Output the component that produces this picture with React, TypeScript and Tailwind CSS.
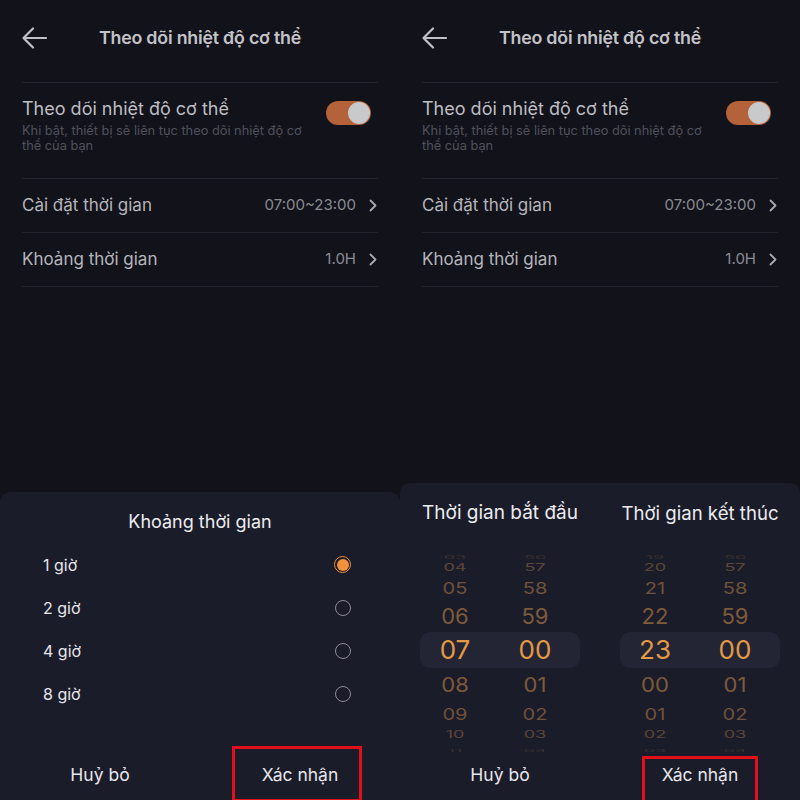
import React from "react";

function BackArrow() {
  return (
    <svg width="26" height="22" viewBox="0 0 26 22" fill="none">
      <path d="M25 11H2.5M12 1.5L2.5 11L12 20.5" stroke="#bfc0c5" strokeWidth="2.2" strokeLinecap="round" strokeLinejoin="round" />
    </svg>
  );
}

function Chevron() {
  return (
    <svg width="8" height="13" viewBox="0 0 8 13" fill="none">
      <path d="M1.5 1.5L6.5 6.5L1.5 11.5" stroke="#a9aab0" strokeWidth="1.8" strokeLinecap="round" strokeLinejoin="round" />
    </svg>
  );
}

function TopScreen() {
  return (
    <div className="flex flex-col">
      <div className="grid h-[82px] grid-cols-[70px_1fr_70px] items-center pb-[6px]">
        <div className="pl-[21px]">
          <BackArrow />
        </div>
        <div className="whitespace-nowrap text-center text-[17.8px] font-semibold tracking-[-0.2px] text-[#c3c3c8]">
          Theo dõi nhiệt độ cơ thể
        </div>
        <div />
      </div>
      <div className="mx-[22px] h-px bg-[#22232d]" />
      <div className="flex h-[95px] items-start justify-between pl-[22px] pr-[29px] pt-[14px]">
        <div className="flex flex-col">
          <div className="text-[18px] leading-[24px] text-[#bdbdc2]">Theo dõi nhiệt độ cơ thể</div>
          <div className="mt-[2px] whitespace-nowrap text-[12.8px] leading-[15px] text-[#50515b]">
            Khi bật, thiết bị sẽ liên tục theo dõi nhiệt độ cơ
            <br />
            thể của bạn
          </div>
        </div>
        <div className="mt-[4px] flex h-[24px] w-[45px] items-center justify-end rounded-full bg-[#b4623a] pr-[1px]">
          <div className="h-[22px] w-[22px] rounded-full bg-[#c9c9cc]" />
        </div>
      </div>
      <div className="mx-[22px] h-px bg-[#22232d]" />
      <div className="flex h-[53px] items-center justify-between pl-[22px] pr-[23px]">
        <div className="text-[17px] text-[#b5b5ba]">Cài đặt thời gian</div>
        <div className="flex items-center gap-[13px]">
          <span className="text-[15px] text-[#8a8a91]">07:00~23:00</span>
          <Chevron />
        </div>
      </div>
      <div className="mx-[22px] h-px bg-[#22232d]" />
      <div className="flex h-[53px] items-center justify-between pl-[22px] pr-[23px]">
        <div className="text-[17px] text-[#b5b5ba]">Khoảng thời gian</div>
        <div className="flex items-center gap-[13px]">
          <span className="text-[15px] text-[#8a8a91]">1.0H</span>
          <Chevron />
        </div>
      </div>
      <div className="mx-[22px] h-px bg-[#22232d]" />
    </div>
  );
}

function Radio({ on }: { on: boolean }) {
  if (on) {
    return (
      <div className="flex h-[17px] w-[17px] items-center justify-center rounded-full border-[1.5px] border-[#f0923a]">
        <div className="h-[12px] w-[12px] rounded-full bg-[#f0923a]" />
      </div>
    );
  }
  return <div className="h-[16px] w-[16px] rounded-full border-[1.5px] border-[#8b8c93]" />;
}

function Buttons() {
  return (
    <div className="mt-auto grid h-[50px] grid-cols-2 items-center text-[17.5px] text-[#e6e6ea]">
      <div className="text-center">Huỷ bỏ</div>
      <div className="text-center">Xác nhận</div>
    </div>
  );
}

function IntervalSheet() {
  const opts = ["1 giờ", "2 giờ", "4 giờ", "8 giờ"];
  return (
    <div className="relative flex h-[308px] flex-col rounded-t-[10px] bg-[#1b1c2a]">
      <div className="pt-[18px] text-center text-[18px] leading-[24px] text-[#ececef]">Khoảng thời gian</div>
      <div className="mt-[9px] flex flex-col">
        {opts.map((o, i) => (
          <div key={o} className="flex h-[43px] items-center justify-between pl-[43px] pr-[49px]">
            <span className="text-[16px] text-[#e6e6ea]">{o}</span>
            <Radio on={i === 0} />
          </div>
        ))}
      </div>
      <Buttons />
      <div className="pointer-events-none absolute left-[232px] top-[254px] h-[56px] w-[130px] border-[3px] border-[#e3101c]" />
    </div>
  );
}

const levels = [
  { h: "h-[10px]", t: "text-[18px] scale-y-[0.25] text-[#3a3130]" },
  { h: "h-[18px]", t: "text-[18px] scale-y-[0.6] text-[#5b4737]" },
  { h: "h-[24px]", t: "text-[20px] scale-y-[0.8] text-[#6f533a]" },
  { h: "h-[32px]", t: "text-[22px] scale-y-[0.95] text-[#7d5a3a]" },
  { h: "h-[36px]", t: "text-[26px] text-[#e39a44]" },
  { h: "h-[34px]", t: "text-[22px] scale-y-[0.9] text-[#7d5a3a]" },
  { h: "h-[24px]", t: "text-[20px] scale-y-[0.8] text-[#6f533a]" },
  { h: "h-[16px]", t: "text-[18px] scale-y-[0.55] text-[#5b4737]" },
  { h: "h-[6px]", t: "text-[18px] scale-y-[0.2] text-[#3a3130]" },
];

function Wheel({ a, b }: { a: string[]; b: string[] }) {
  return (
    <div className="flex w-[160px] flex-col">
      {levels.map((lv, i) => (
        <div
          key={i}
          className={
            i === 4
              ? "grid h-[36px] grid-cols-[70px_70px] items-center gap-x-[10px] rounded-[10px] bg-[#232434]"
              : "grid grid-cols-[70px_70px] items-center gap-x-[10px] " + lv.h
          }
        >
          <div className={"text-center leading-none " + lv.t}>{a[i]}</div>
          <div className={"text-center leading-none " + lv.t}>{b[i]}</div>
        </div>
      ))}
    </div>
  );
}

function TimeSheet() {
  return (
    <div className="relative flex h-[317px] flex-col rounded-t-[10px] bg-[#1b1c2a]">
      <div className="grid grid-cols-[160px_160px] gap-x-[40px] px-[20px] pt-[18px]">
        <div className="flex justify-center whitespace-nowrap text-[19px] leading-[24px] text-[#ececef]">Thời gian bắt đầu</div>
        <div className="flex justify-center whitespace-nowrap text-[18.6px] leading-[24px] text-[#ececef]">Thời gian kết thúc</div>
      </div>
      <div className="mt-[23px] grid grid-cols-[160px_160px] gap-x-[40px] px-[20px]">
        <Wheel
          a={["03", "04", "05", "06", "07", "08", "09", "10", "11"]}
          b={["56", "57", "58", "59", "00", "01", "02", "03", "04"]}
        />
        <Wheel
          a={["19", "20", "21", "22", "23", "00", "01", "02", "03"]}
          b={["56", "57", "58", "59", "00", "01", "02", "03", "04"]}
        />
      </div>
      <Buttons />
      <div className="pointer-events-none absolute left-[242px] top-[273px] h-[48px] w-[116px] border-[3px] border-[#e3101c]" />
    </div>
  );
}

export default function App() {
  return (
    <div className="flex h-[800px] w-[800px] overflow-hidden bg-[#12121b] font-['Inter','Noto_Sans',sans-serif]">
      <div className="flex h-full w-[400px] flex-col">
        <TopScreen />
        <div className="mt-auto">
          <IntervalSheet />
        </div>
      </div>
      <div className="flex h-full w-[400px] flex-col">
        <TopScreen />
        <div className="mt-auto">
          <TimeSheet />
        </div>
      </div>
    </div>
  );
}
